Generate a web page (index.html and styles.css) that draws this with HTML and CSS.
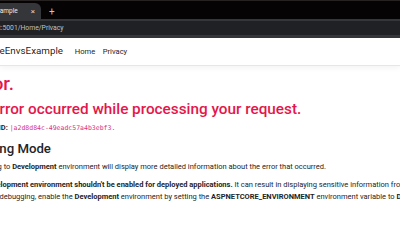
FILE: index.html
```html
<!DOCTYPE html>
<html lang="en">
<head>
    <meta charset="UTF-8">
    <meta name="viewport" content="width=device-width, initial-scale=1.0">
    <title>Error - NetCoreEnvsExample</title>
    <link rel="stylesheet" href="styles.css">
</head>
<body>
    <!-- Browser chrome -->
    <div class="tabstrip">
        <div class="tab">
            <span class="tab-title">Error - NetCoreEnvsExample</span>
            <span class="tab-close">&#215;</span>
        </div>
        <span class="new-tab">+</span>
    </div>
    <div class="toolbar">
        <div class="omnibox">
            <span class="url">localhost:5001/Home/Privacy</span>
        </div>
    </div>

    <!-- Site header -->
    <header class="navbar">
        <div class="container nav-inner">
            <a class="brand" href="#">NetCoreEnvsExample</a>
            <a class="nav-link" href="#">Home</a>
            <a class="nav-link" href="#">Privacy</a>
        </div>
    </header>

    <main class="container">
        <h1 class="text-danger">Error.</h1>
        <h2 class="text-danger">An error occurred while processing your request.</h2>
        <p><strong>Request ID:</strong> <code>|a2d8d84c-49eadc57a4b3ebf3.</code></p>

        <h3>Staging Mode</h3>
        <p>Swapping to <strong>Development</strong> environment will display more detailed information about the error that occurred.</p>
        <p>
            <strong>The Development environment shouldn't be enabled for deployed applications.</strong>
            It can result in displaying sensitive information from exceptions to end users.<br>
            For local debugging, enable the <strong>Development</strong> environment by setting the <strong>ASPNETCORE_ENVIRONMENT</strong> environment variable to <strong>Development</strong> and restarting the app.
        </p>
    </main>
</body>
</html>
```

FILE: styles.css
```css
body {
    margin: 0;
    overflow: hidden;
    font-family: Roboto, "Liberation Sans", Arial, sans-serif;
    color: #212529;
    background: #fff;
}

/* browser chrome */
.tabstrip {
    display: flex;
    align-items: flex-end;
    height: 19px;
    padding-top: 3px;
    box-sizing: border-box;
    background: #050303;
    border-top: 1px solid #262222;
}
.tab {
    display: flex;
    align-items: center;
    justify-content: flex-end;
    width: 41px;
    height: 16px;
    padding-right: 6px;
    box-sizing: border-box;
    background: #35363a;
    border-top-right-radius: 6px;
}
.tab-title {
    flex-shrink: 0;
    white-space: nowrap;
    font-size: 6.5px;
    color: #e8eaed;
}
.tab-close {
    margin-left: 13px;
    font-size: 8px;
    color: #d0d2d6;
}
.new-tab {
    margin-left: 8px;
    align-self: center;
    font-size: 10px;
    line-height: 10px;
    color: #c4c7c5;
}
.toolbar {
    padding: 2px 0 3px;
    background: #35363a;
}
.omnibox {
    display: flex;
    align-items: center;
    height: 14px;
    background: #202124;
}
.url {
    margin-left: -27px;
    white-space: nowrap;
    font-size: 6.8px;
    color: #bdc1c6;
}

/* page */
.container {
    width: 700px;
    margin-left: -31px;
}
.navbar {
    padding: 3.75px 0;
    border-bottom: 1px solid #e6e6e6;
    box-shadow: 0 2px 6px rgba(0, 0, 0, 0.05);
    margin-bottom: 7.5px;
}
.nav-inner {
    display: flex;
    align-items: center;
}
.brand {
    padding: 2.3px 0;
    margin-right: 8px;
    font-size: 9.8px;
    line-height: 1.5;
    color: rgba(0, 0, 0, 0.9);
    text-decoration: none;
    white-space: nowrap;
}
.nav-link {
    padding: 3.75px;
    font-size: 7.6px;
    line-height: 1.5;
    color: #212529;
    text-decoration: none;
}

h1, h2, h3 {
    margin: 0 0 3.75px;
    font-weight: 500;
    line-height: 1.2;
    white-space: nowrap;
}
h1 { font-size: 18.8px; }
h2 { font-size: 15.3px; }
h3 { font-size: 13.2px; }
.text-danger { color: #e3174b; }
p {
    margin: 0 0 7.5px;
    font-size: 7.5px;
    line-height: 1.5;
    white-space: nowrap;
}
code {
    font-family: "DejaVu Sans Mono", "Liberation Mono", monospace;
    font-size: 6.5px;
    color: #d63384;
}
```
